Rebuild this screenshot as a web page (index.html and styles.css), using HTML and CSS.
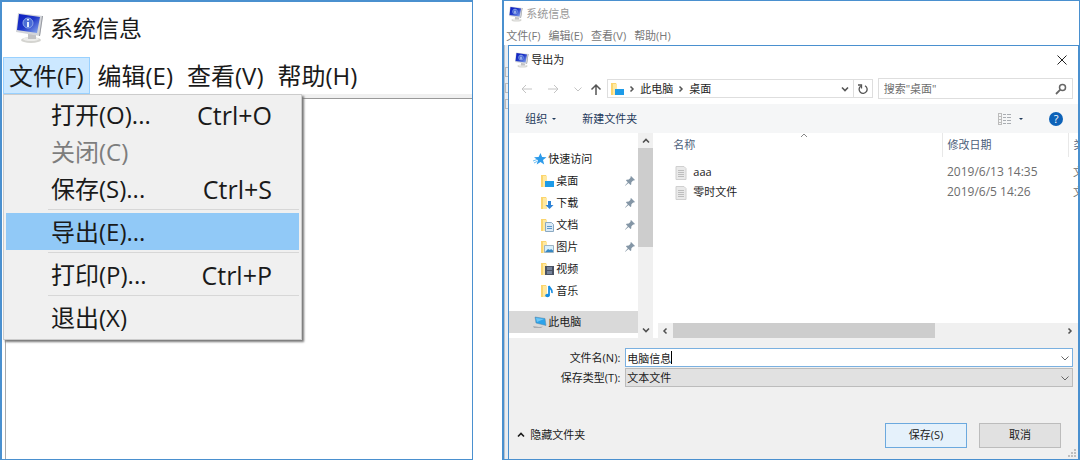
FILE: index.html
```html
<!doctype html>
<html lang="zh-CN">
	<head>
		<meta charset="utf-8">
		<title>系统信息</title>
		<link rel="stylesheet" href="styles.css">
	</head>
	<body>
		<svg class="defs" aria-hidden="true">
			<defs>
				<linearGradient id="screen" x1="0" y1="0" x2="1" y2="1">
					<stop offset="0" stop-color="#0a1cc0"/>
					<stop offset="0.5" stop-color="#2038c8"/>
					<stop offset="1" stop-color="#8fb0f0"/>
				</linearGradient>
			</defs>
			<symbol id="i-monitor" viewBox="0 0 28 32">
				<ellipse cx="15" cy="28" rx="10" ry="3" fill="#d4d4d0"/>
				<ellipse cx="15" cy="27" rx="8" ry="2" fill="#ececea"/>
				<path d="M12 21l8 2v4h-8z" fill="#c2c2c4"/>
				<path d="M2 1l25 3-3 20L0 20z" fill="#d3d5da"/>
				<path d="M26 4l1 0-3 20h-1z" fill="#9699a0"/>
				<path d="M3 2l21 3-3 16L1 18z" fill="url(#screen)"/>
				<circle cx="12" cy="11" r="5" fill="#4a6cd6" stroke="#8da8ea"/>
				<path d="M12 10v5M12 7v1.500" stroke="#e4ecff" stroke-width="2"/>
			</symbol>
			<symbol id="i-folder" viewBox="0 0 14 14">
				<path d="M1 1h5l1 2v10H1z" fill="#fbd56e"/>
				<path d="M3 2h4v11H3z" fill="#ffe9a2"/>
			</symbol>
			<symbol id="i-pin" viewBox="0 0 10 10">
				<path d="M6 0l4 4-1 .6-.8-.2L6.400 6.200 6.200 8.500 5.500 9 3.500 7 .3 9.700 0 9.500 2.800 6.300 1 4.500 1.500 3.800 3.800 3.600 5.600 1.800 5.400 1z" fill="#8496a6"/>
			</symbol>
			<symbol id="i-down" viewBox="0 0 10 10">
				<path d="M1.500 3.500L5 7l3.500-3.500" fill="none" stroke="currentColor"/>
			</symbol>
			<symbol id="i-down-bold" viewBox="0 0 10 10">
				<path d="M2 3.500L5 6.500l3-3" fill="none" stroke="currentColor" stroke-width="1.600"/>
			</symbol>
			<symbol id="i-right-bold" viewBox="0 0 10 10">
				<path d="M3.500 2.500L6 5l-2.500 2.500" fill="none" stroke="currentColor" stroke-width="1.500"/>
			</symbol>
			<symbol id="i-page" viewBox="0 0 12 14">
				<path d="M1 .5h8l2 2v11H1z" fill="#e9e9e9" stroke="#d0d0d0"/>
				<path d="M3 4.500h6M3 6.500h6M3 8.500h6M3 10.500h6" stroke="#bdbdbd"/>
			</symbol>
		</svg>

		<main class="screens">
			<section class="window info">
				<header class="titlebar">
					<svg class="logo"><use href="#i-monitor"/></svg>
					<h1>系统信息</h1>
				</header>
				<nav class="menubar">
					<button class="open">文件(F)</button>
					<button>编辑(E)</button>
					<button>查看(V)</button>
					<button>帮助(H)</button>
					<div class="dropdown">
						<button>打开(O)...<kbd>Ctrl+O</kbd></button>
						<button disabled>关闭(C)</button>
						<button>保存(S)...<kbd>Ctrl+S</kbd></button>
						<hr>
						<button class="active">导出(E)...</button>
						<hr>
						<button>打印(P)...<kbd>Ctrl+P</kbd></button>
						<hr>
						<button>退出(X)</button>
					</div>
				</nav>
				<div class="content"></div>
			</section>

			<section class="window behind">
				<header class="titlebar">
					<svg class="logo"><use href="#i-monitor"/></svg>
					<h1>系统信息</h1>
				</header>
				<nav class="menubar">
					<button>文件(F)</button>
					<button>编辑(E)</button>
					<button>查看(V)</button>
					<button>帮助(H)</button>
				</nav>
				<div class="backdrop">
					<div class="edge"><i></i><i></i><i></i></div>
					<form class="dialog">
						<header class="caption">
							<svg class="logo"><use href="#i-monitor"/></svg>
							<h2>导出为</h2>
							<button type="button" class="close" aria-label="关闭">
								<svg viewBox="0 0 10 10"><path d="M.5.5l9 9M9.500.5l-9 9" stroke="#222" fill="none"/></svg>
							</button>
						</header>

						<div class="navigate">
							<button type="button" class="arrow off" aria-label="后退"><svg viewBox="0 0 12 10"><path d="M11 5H1M5 1L1 5l4 4" fill="none" stroke="currentColor"/></svg></button>
							<button type="button" class="arrow off" aria-label="前进"><svg viewBox="0 0 12 10"><path d="M1 5h10M7 1l4 4-4 4" fill="none" stroke="currentColor"/></svg></button>
							<button type="button" class="recent off" aria-label="最近"><svg class="small"><use href="#i-down"/></svg></button>
							<button type="button" class="arrow" aria-label="上移"><svg viewBox="0 0 12 12"><path d="M6 12V2M1.500 6.500L6 2l4.500 4.500" fill="none" stroke="currentColor" stroke-width="1.500"/></svg></button>
							<div class="address">
								<svg class="icon" viewBox="0 0 14 14"><use href="#i-folder"/><path d="M5 7h9v6H5z" fill="#1d9be8"/></svg>
								<svg class="small"><use href="#i-right-bold"/></svg>
								<a href="#">此电脑</a>
								<svg class="small"><use href="#i-right-bold"/></svg>
								<a href="#">桌面</a>
								<button type="button" class="history" aria-label="历史"><svg class="small"><use href="#i-down-bold"/></svg></button>
								<button type="button" class="refresh" aria-label="刷新">
									<svg viewBox="0 0 10 10"><path d="M7 1.800A4 4 0 1 1 2.600 2.200M0 1h3.500v3.500" fill="none" stroke="currentColor" stroke-width="1.300"/></svg>
								</button>
							</div>
							<label class="search">
								<input type="text" placeholder="搜索&quot;桌面&quot;" aria-label="搜索">
								<svg viewBox="0 0 12 12"><circle cx="7.500" cy="4.500" r="3" fill="none" stroke="#666" stroke-width="1.500"/><path d="M5.300 6.700L1 11" stroke="#666" stroke-width="1.800"/></svg>
							</label>
						</div>

						<div class="toolbar">
							<button type="button">组织<span class="caret"></span></button>
							<button type="button">新建文件夹</button>
							<button type="button" class="view" aria-label="视图">
								<svg viewBox="0 0 13 12"><path d="M0 .5h4M0 3.500h4M0 6.500h4M0 9.500h4M0 11.500h4M.5 0v12M3.500 0v12" stroke="#bcbcbc"/><path d="M5 1.500h3M9 1.500h4M5 4.500h3M9 4.500h4M5 7.500h3M9 7.500h4M5 10.500h3M9 10.500h4" stroke="#a9adb2"/></svg>
								<span class="caret"></span>
							</button>
							<button type="button" class="help" aria-label="帮助">?</button>
						</div>

						<div class="browser">
							<nav class="tree">
								<a href="#" class="root"><svg class="icon" viewBox="0 0 14 14"><path d="M7.500 1l1.600 4 4.400.2-3.500 2.800 1.200 4.500-3.700-2.400L3.700 12.500l1.200-4.300L1 5.300l4.600-.2z" fill="#2d9bea"/><path d="M0 9l4-1.500M1 11l3-1.500" stroke="#6dbdf2"/></svg>快速访问</a>
								<a href="#"><svg class="icon" viewBox="0 0 14 14"><use href="#i-folder"/><path d="M5 7h9v6H5z" fill="#1d9be8"/></svg>桌面<svg class="pin"><use href="#i-pin"/></svg></a>
								<a href="#"><svg class="icon" viewBox="0 0 14 14"><use href="#i-folder"/><path d="M8 5h3v4h2.500l-4 4-4-4H8z" fill="#2d82d6"/></svg>下载<svg class="pin"><use href="#i-pin"/></svg></a>
								<a href="#"><svg class="icon" viewBox="0 0 14 14"><use href="#i-folder"/><path d="M5.500 4.500h6l2 2v7h-8z" fill="#dbeaf6" stroke="#8aa9c2"/><path d="M7 8.500h5M7 10.500h5" stroke="#5e98cb"/></svg>文档<svg class="pin"><use href="#i-pin"/></svg></a>
								<a href="#"><svg class="icon" viewBox="0 0 14 14"><use href="#i-folder"/><path d="M4.500 5.500h9v7h-9z" fill="#d9f0fc" stroke="#9eb4c2"/><path d="M5 12l3-3 2 1 1-1 2 1.500V12z" fill="#3688c4"/></svg>图片<svg class="pin"><use href="#i-pin"/></svg></a>
								<a href="#"><svg class="icon" viewBox="0 0 14 14"><use href="#i-folder"/><path d="M5 4h9v9H5z" fill="#4a5263"/><path d="M7 5h5v3H7zM7 9h5v3H7z" fill="#76839b"/></svg>视频</a>
								<a href="#"><svg class="icon" viewBox="0 0 14 14"><use href="#i-folder"/><ellipse cx="7.500" cy="11.500" rx="2.300" ry="1.800" fill="#168de2"/><path d="M9 11.500V2c.5 3 4 3 3 7" fill="none" stroke="#168de2" stroke-width="1.800"/></svg>音乐</a>
								<a href="#" class="root current"><svg class="icon" viewBox="0 0 14 14"><path d="M2 2l10 1.500 1 7L3 8z" fill="#2ba2ea" stroke="#5b87a5" stroke-width=".5"/><path d="M3 3l8 1-7 3z" fill="#6cc6f6"/><path d="M0 11l6 1 4-.5-2 1.500H1z" fill="#a9adb2"/></svg>此电脑</a>
							</nav>
							<div class="scroll vertical">
								<svg class="small up"><use href="#i-down-bold"/></svg>
								<div class="thumb"></div>
								<svg class="small"><use href="#i-down-bold"/></svg>
							</div>
							<div class="list">
								<svg class="sort" viewBox="0 0 8 5"><path d="M1 4l3-3 3 3" fill="none" stroke="#888"/></svg>
								<table>
									<thead>
										<tr><th class="name">名称</th><th class="date">修改日期</th><th>类型</th></tr>
									</thead>
									<tbody>
										<tr><td class="name"><svg class="page"><use href="#i-page"/></svg>aaa</td><td class="time">2019/6/13 14:35</td><td>文本文档</td></tr>
										<tr><td class="name"><svg class="page"><use href="#i-page"/></svg>零时文件</td><td class="time">2019/6/5 14:26</td><td>文本文档</td></tr>
									</tbody>
								</table>
								<div class="scroll horizontal">
									<svg class="small left"><use href="#i-right-bold"/></svg>
									<div class="thumb"></div>
									<svg class="small"><use href="#i-right-bold"/></svg>
								</div>
							</div>
						</div>

						<div class="fields">
							<label for="filename">文件名(N):</label>
							<div class="combo">
								<input id="filename" type="text" value="电脑信息">
								<svg class="small"><use href="#i-down"/></svg>
							</div>
							<label for="filetype">保存类型(T):</label>
							<div class="combo">
								<select id="filetype"><option>文本文件</option></select>
								<svg class="small"><use href="#i-down"/></svg>
							</div>
						</div>

						<footer class="actions">
							<button type="button" class="hide"><svg class="small up"><use href="#i-down-bold"/></svg>隐藏文件夹</button>
							<button type="button" class="push default">保存(S)</button>
							<button type="button" class="push">取消</button>
							<svg class="grip" viewBox="0 0 8 8"><path d="M6 0h2v2H6zM3 3h2v2H3zM6 3h2v2H6zM0 6h2v2H0zM3 6h2v2H3zM6 6h2v2H6z" fill="#bfbfbf"/></svg>
						</footer>
					</form>
				</div>
			</section>
		</main>
	</body>
</html>
```

FILE: styles.css
```css
* {
	box-sizing: border-box;
}
body {
	margin: 0;
	background: #fff;
	color: #1a1a1a;
	font: 11px/16px "Open Sans", "Noto Sans CJK SC", sans-serif;
}
h1, h2 {
	margin: 0;
	font-size: inherit;
	font-weight: normal;
}
button, input, select {
	margin: 0;
	padding: 0;
	border: 0;
	background: none;
	color: inherit;
	font: inherit;
}
a {
	color: inherit;
	text-decoration: none;
}
svg {
	display: block;
	flex: none;
}
.defs {
	position: absolute;
	width: 0;
	height: 0;
}
.small {
	width: 10px;
	height: 10px;
}
.icon {
	width: 14px;
	height: 14px;
}
.up, .left {
	transform: rotate(180deg);
}

.screens {
	display: flex;
	gap: 29px;
	min-height: 100vh;
}
.window {
	display: flex;
	flex-direction: column;
	min-width: 0;
	border: 1px solid #4a90cf;
}
.titlebar, .menubar {
	display: flex;
	align-items: center;
}

/* system information window, enlarged */
.info {
	flex: 473 1 0;
	border-width: 2px 1px 1px 2px;
	font-size: 23px;
	line-height: 34px;
}
.info .titlebar {
	height: 55px;
	padding: 0 0 3px 14px;
	gap: 6px;
}
.info .logo {
	width: 28px;
	height: 32px;
}
.info .menubar {
	position: relative;
	height: 37px;
	gap: 2px;
	border-left: 1px solid #fff;
	font-size: 24px;
}
.info .menubar > button {
	height: 37px;
	padding: 0 6px;
	white-space: nowrap;
}
.info .menubar > .open {
	padding: 0 5px;
	background: #cce8ff;
	border: 1px solid #99d1ff;
}
.dropdown {
	position: absolute;
	top: 37px;
	left: 0;
	width: 299px;
	padding: 1px 2px 3px;
	background: #f0f0f0;
	border: 1px solid #ccc;
	box-shadow: 2px 2px 2px #777;
}
.dropdown button {
	display: flex;
	justify-content: space-between;
	align-items: center;
	width: 100%;
	height: 37px;
	padding: 0 27px 0 45px;
}
.dropdown button:disabled {
	color: #7d7d7d;
}
.dropdown .active {
	background: #91c9f7;
}
.dropdown kbd {
	font: 25px/34px "Open Sans", sans-serif;
}
.dropdown hr {
	margin: 2px 0 3px 42px;
	border: 0;
	border-top: 1px solid #d7d7d7;
}
.content {
	flex: 1;
	margin: 4px 0 0 3px;
	border-top: 1px solid #999;
	border-left: 1px solid #aaa;
	box-shadow: 0 -4px 0 #f0f0f0;
}

/* same window in the background, behind the dialog */
.behind {
	flex: 578 1 0;
	border-left-width: 2px;
	color: #777;
}
.behind > .titlebar {
	height: 26px;
	padding-left: 5px;
	gap: 3px;
	color: #999;
}
.behind .logo {
	width: 14px;
	height: 16px;
}
.behind > .menubar {
	height: 18px;
	padding-left: 2px;
	gap: 8px;
}
.backdrop {
	flex: 1;
	display: flex;
	background: #e9edf2;
}
.edge {
	width: 4px;
	padding-top: 22px;
	border-left: 1px solid #b8c4d0;
}
.edge i {
	display: block;
	height: 10px;
	margin-bottom: 6px;
	border: 1px solid #bbb;
	border-right: 0;
}

/* save dialog */
.dialog {
	flex: 1;
	min-width: 0;
	display: flex;
	flex-direction: column;
	background: #f0f0f0;
	border: 1px solid #4a90cf;
	border-width: 1px 1px 0 1px;
	color: #1a1a1a;
}
.caption {
	display: flex;
	align-items: center;
	gap: 2px;
	height: 27px;
	padding: 0 11px 0 6px;
	background: #fff;
}
.close {
	margin-left: auto;
}
.close svg {
	width: 10px;
	height: 10px;
}
.navigate {
	display: flex;
	align-items: center;
	height: 31px;
	padding: 0 5px 0 12px;
	background: #fff;
	color: #555;
}
.off {
	color: #c4c4c4;
}
.arrow {
	margin-right: 14px;
}
.arrow svg {
	width: 12px;
	height: 12px;
}
.recent {
	margin-right: 7px;
}
.navigate .recent + .arrow {
	margin-right: 5px;
}
.address {
	flex: 271 1 0;
	display: flex;
	align-items: center;
	gap: 3px;
	height: 19px;
	padding-left: 2px;
	border: 1px solid #dedede;
}
.address a {
	color: #222;
}
.history {
	margin-left: auto;
}
.refresh {
	height: 100%;
	padding: 0 4px;
	border-left: 1px solid #dedede;
}
.refresh svg {
	width: 10px;
	height: 10px;
}
.search {
	flex: 190 1 0;
	display: flex;
	align-items: center;
	height: 21px;
	margin-left: 5px;
	padding: 0 5px;
	border: 1px solid #dedede;
}
.search input {
	flex: 1;
	min-width: 0;
	outline: 0;
}
.search input::placeholder {
	color: #6d6d6d;
	opacity: 1;
}
.search svg {
	width: 12px;
	height: 12px;
}
.toolbar {
	display: flex;
	align-items: center;
	gap: 26px;
	height: 29px;
	padding: 0 15px 0 16px;
	background: #f5f6f7;
	color: #1e395b;
}
.toolbar button {
	display: flex;
	align-items: center;
	gap: 5px;
}
.caret {
	border: 2px solid transparent;
	border-top-color: currentColor;
	border-bottom: 0;
}
.toolbar .view {
	gap: 8px;
	margin-left: auto;
}
.view svg {
	width: 13px;
	height: 12px;
}
.toolbar .help {
	justify-content: center;
	width: 14px;
	height: 14px;
	border-radius: 50%;
	background: #0d62b8;
	color: #fff;
}

.browser {
	display: flex;
	height: 205px;
	background: #fff;
}
.tree {
	flex: 0 0 129px;
	padding-top: 15px;
}
.tree a {
	display: flex;
	align-items: center;
	gap: 2px;
	height: 22px;
	padding: 0 3px 0 31px;
}
.tree .root {
	gap: 1px;
	padding-left: 24px;
}
.tree .current {
	margin-top: 9px;
	background: #d9d9d9;
}
.pin {
	width: 10px;
	height: 10px;
	margin-left: auto;
}
.scroll {
	display: flex;
	align-items: center;
	background: #f0f0f0;
	color: #505050;
}
.thumb {
	background: #cdcdcd;
}
.vertical {
	flex: 0 0 15px;
	flex-direction: column;
	justify-content: space-between;
	padding: 3px 0;
}
.vertical .thumb {
	width: 100%;
	height: 99px;
	margin: 2px 0 auto;
}
.list {
	flex: 1;
	min-width: 0;
	position: relative;
	display: flex;
	flex-direction: column;
	justify-content: space-between;
	padding-left: 5px;
	overflow: hidden;
}
.sort {
	position: absolute;
	top: 0;
	left: 147px;
	width: 8px;
	height: 5px;
}
table {
	width: 100%;
	table-layout: fixed;
	border-collapse: collapse;
	white-space: nowrap;
}
th {
	height: 24px;
	padding: 0 0 0 5px;
	border-right: 1px solid #e8e8e8;
	color: #4c607a;
	font-weight: normal;
	text-align: left;
	overflow: hidden;
}
th:last-child {
	width: 10px;
	border-right: 0;
}
tbody::before {
	content: "";
	display: block;
	height: 5px;
}
td {
	height: 20px;
	padding: 0 0 0 5px;
	color: #6d6d6d;
	overflow: hidden;
}
th.name {
	padding-left: 15px;
}
th.date {
	width: 126px;
}
td.name {
	padding-left: 17px;
	color: #1a1a1a;
}
td.time {
	font-size: 12px;
}
.page {
	display: inline-block;
	width: 12px;
	height: 14px;
	margin-right: 6px;
	vertical-align: middle;
}
.horizontal {
	height: 15px;
	padding: 0 3px 0 2px;
}
.horizontal .thumb {
	width: 63%;
	height: 100%;
	margin: 0 auto 0 3px;
}

.fields {
	display: grid;
	grid-template-columns: 111px 1fr;
	gap: 1px 5px;
	margin: 10px 5px 0 0;
}
.fields label {
	line-height: 19px;
	text-align: right;
}
.combo {
	display: flex;
	align-items: center;
	height: 19px;
	padding-right: 2px;
	border: 1px solid #7ab0e0;
	background: #fff;
	color: #666;
}
.combo:last-child {
	border-color: #bcbcbc;
	background: #e1e1e1;
}
.combo input, .combo select {
	flex: 1;
	min-width: 0;
	height: 17px;
	padding-left: 1px;
	outline: 0;
	appearance: none;
	color: #1a1a1a;
}
/* text cursor after the file name */
.combo input {
	background: linear-gradient(#000, #000) 45px center / 1px 13px no-repeat;
}
.actions {
	position: relative;
	flex: 1;
	display: flex;
	align-items: center;
	gap: 12px;
	padding: 24px 17px 0 7px;
}
.hide {
	display: flex;
	align-items: center;
	gap: 4px;
	margin-right: auto;
}
.push {
	width: 82px;
	height: 25px;
	background: #e1e1e1;
	border: 1px solid #bcbcbc;
}
.default {
	background: #e5f1fb;
	border-color: #6ca9de;
}
.grip {
	position: absolute;
	right: 2px;
	bottom: 2px;
	width: 8px;
	height: 8px;
}
```
